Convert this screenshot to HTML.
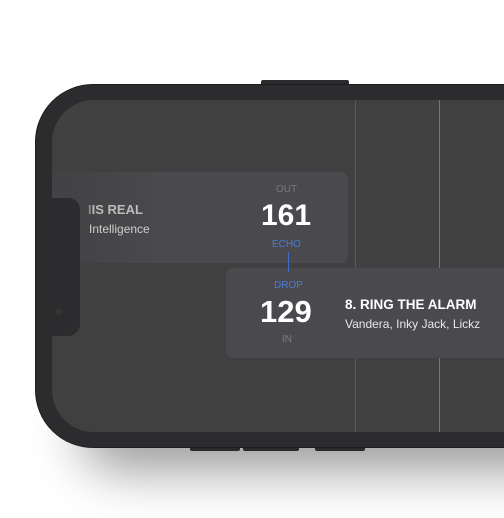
<!DOCTYPE html>
<html><head><style>
body{margin:0;width:504px;height:518px;background:#fff;overflow:hidden;position:relative;font-family:"Liberation Sans",sans-serif}
.shadow{position:absolute;left:80px;top:390px;width:520px;height:80px;background:#000;opacity:.4;filter:blur(26px);border-radius:40px}
.btn{position:absolute;background:#2a2a2c;border-radius:2px}
.phone{position:absolute;left:35px;top:84px;width:540px;height:364px;background:#2c2c2e;border-radius:58px;border:1px solid #1e1e20;box-sizing:border-box}
.screen{position:absolute;left:52px;top:100px;width:520px;height:332px;background:#404040;border-radius:42px;overflow:hidden}
.notch{position:absolute;left:52px;top:198px;width:28px;height:138px;background:#2c2c2e;border-radius:0 12px 12px 0}
.cam{position:absolute;left:54px;top:307px;width:10px;height:10px;border-radius:50%;background:#333;box-shadow:inset 0 0 2px #222}
.vl{position:absolute;top:0;width:1px;height:332px}
.card{position:absolute;background:#4a4a4e;border-radius:7px}
.t{position:absolute;white-space:nowrap}
</style></head><body>
<div class="shadow"></div>
<div class="btn" style="left:261px;top:80px;width:88px;height:6px"></div>
<div class="btn" style="left:190px;top:445px;width:50px;height:6px"></div>
<div class="btn" style="left:243px;top:445px;width:56px;height:6px"></div>
<div class="btn" style="left:315px;top:445px;width:50px;height:6px"></div>
<div class="phone"></div>
<div class="screen">
 <div class="vl" style="left:303px;background:#5a5a5a"></div>
 <div class="vl" style="left:387px;background:#d0553f"></div>
 <div class="card" style="left:0;top:72px;width:296px;height:91px;background:linear-gradient(90deg,#434345 0,#434345 20px,#4a4a4e 110px)"></div>
 <div class="card" style="left:174px;top:168px;width:360px;height:90px"></div>
 <div class="t" style="left:36px;top:102px;font-size:13px;font-weight:bold;color:#bcbcbc"><span style="color:#8a8a8a">I</span>IS REAL</div>
 <div class="t" style="left:37px;top:122px;font-size:12px;color:#cfcfcf">Intelligence</div>
 <div class="t" style="left:224px;top:84px;font-size:10px;color:#7b7b7d">OUT</div>
 <div class="t" style="left:209px;top:99px;font-size:30px;font-weight:bold;color:#fff">161</div>
 <div class="t" style="left:220px;top:139px;font-size:10px;color:#4a7bd8">ECHO</div>
 <div style="position:absolute;left:236px;top:152px;width:1px;height:20px;background:#3e6ec8"></div>
 <div class="t" style="left:222px;top:180px;font-size:10px;color:#4a7bd8">DROP</div>
 <div class="t" style="left:208px;top:194px;font-size:31px;font-weight:bold;color:#fff">129</div>
 <div class="t" style="left:230px;top:234px;font-size:10px;color:#7b7b7d">IN</div>
 <div class="t" style="left:293px;top:197px;font-size:13.5px;font-weight:bold;color:#fff">8. RING THE ALARM</div>
 <div class="t" style="left:293px;top:217px;font-size:12px;color:#e8e8e8">Vandera, Inky Jack, Lickz</div>
</div>
<div class="notch"></div>
<div class="cam"></div>
</body></html>
